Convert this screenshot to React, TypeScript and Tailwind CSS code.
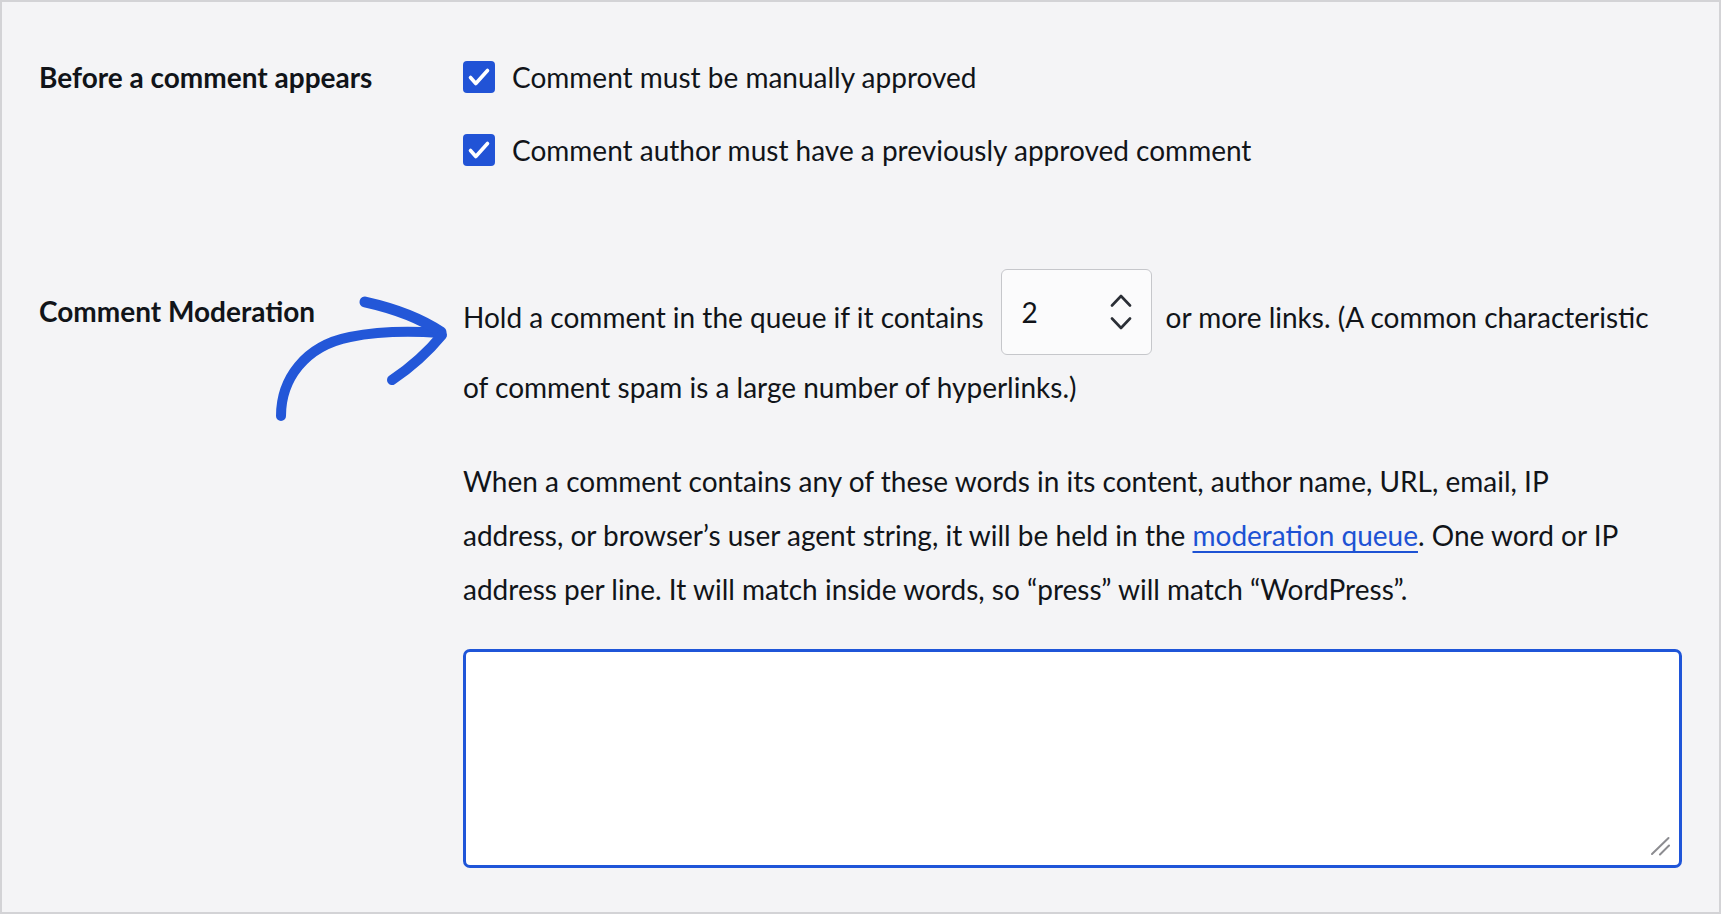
import React from "react";

const Checkbox = () => (
	<span className="w-8 h-8 shrink-0 rounded-[4px] bg-[#2153d6] flex items-center justify-center">
		<svg width="32" height="32" viewBox="0 0 32 32" fill="none">
			<path
				d="M7.5 16.5 L12.8 22.5 L24.5 9.5"
				stroke="#ffffff"
				strokeWidth="3.6"
				strokeLinecap="round"
				strokeLinejoin="round"
			/>
		</svg>
	</span>
);

const Chevron = ({ up }: { up?: boolean }) => (
	<svg width="22" height="13" viewBox="0 0 22 13" fill="none">
		<path
			d={up ? "M2 11.5 L11 2 L20 11.5" : "M2 1.5 L11 11 L20 1.5"}
			stroke="#2b2f36"
			strokeWidth="2.6"
			strokeLinecap="round"
			strokeLinejoin="round"
		/>
	</svg>
);

// number field with custom spin arrows
const NumberBox = ({ value }: { value: number }) => (
	<span className="inline-flex align-[5px] w-[151px] h-[86px] my-[-12px] ml-[17px] mr-[14px] items-center justify-between pl-[20px] pr-[19px] rounded-[6px] border border-[#c6c7cb] bg-[#fbfbfc] leading-none">
		<span>{value}</span>
		<span className="flex flex-col gap-[10px]">
			<Chevron up />
			<Chevron />
		</span>
	</span>
);

const App = () => {
	return (
		<div className="w-[1721px] h-[914px] border-2 border-[#d3d3d6] bg-[#f4f4f6] text-[#111419] text-[28px] font-['Lato','Noto_Sans',sans-serif] overflow-hidden">
			<div className="pl-[37px] pt-[54px]">
				{/* Before a comment appears */}
				<section className="flex">
					<h2 className="w-[424px] shrink-0 font-bold leading-[42px]">
						Before a comment appears
					</h2>
					<div className="flex flex-col gap-[31px]">
						<label className="flex items-center gap-[17px] leading-[42px]">
							<Checkbox />
							Comment must be manually approved
						</label>
						<label className="flex items-center gap-[17px] leading-[42px]">
							<Checkbox />
							Comment author must have a previously approved comment
						</label>
					</div>
				</section>

				{/* Comment Moderation */}
				<section className="relative flex mt-[110px]">
					<h2 className="w-[424px] shrink-0 font-bold leading-[42px] mt-[9px]">
						Comment Moderation
					</h2>

					<svg
						className="absolute left-[231px] top-[9px]"
						width="185"
						height="140"
						viewBox="270 290 185 140"
						fill="none"
						stroke="#2357d8"
						strokeLinecap="round"
						strokeLinejoin="round"
					>
						<path d="M281 416 C 281 380, 304 346, 350 337 C 380 331, 412 331, 440 333" strokeWidth="10" />
						<path d="M365 302 C 392 308, 420 318, 441 332" strokeWidth="11" />
						<path d="M442 335 C 428 352, 410 368, 392 380" strokeWidth="10" />
					</svg>

					<div className="w-[1219px]">
						<p className="leading-[70px] max-w-[1188px]">
							Hold a comment in the queue if it contains
							<NumberBox value={2} />
							or more links. (A common characteristic of comment spam is a large
							number of hyperlinks.)
						</p>
						<p className="mt-[32px] leading-[54px] max-w-[1188px]">
							When a comment contains any of these words in its content, author
							name, URL, email, IP address, or browser’s user agent string, it
							will be held in the{" "}
							<a href="#" className="text-[#1d52d4] underline underline-offset-[5px] decoration-[2px]">
								moderation queue
							</a>
							. One word or IP address per line. It will match inside words, so
							“press” will match “WordPress”.
						</p>
						<div className="relative mt-[33px]">
							<textarea
								className="block w-[1219px] h-[219px] resize-none rounded-[7px] border-[3px] border-[#1f55d8] bg-white outline-none"
								rows={6}
							/>
							<svg
								className="absolute right-[12px] bottom-[12px]"
								width="20"
								height="20"
								viewBox="0 0 20 20"
								fill="none"
								stroke="#8c8c90"
								strokeWidth="2"
								strokeLinecap="round"
							>
								<path d="M2 18 L18.5 2" />
								<path d="M10 18.5 L19 9.5" />
							</svg>
						</div>
					</div>
				</section>
			</div>
		</div>
	);
};

export default App;
